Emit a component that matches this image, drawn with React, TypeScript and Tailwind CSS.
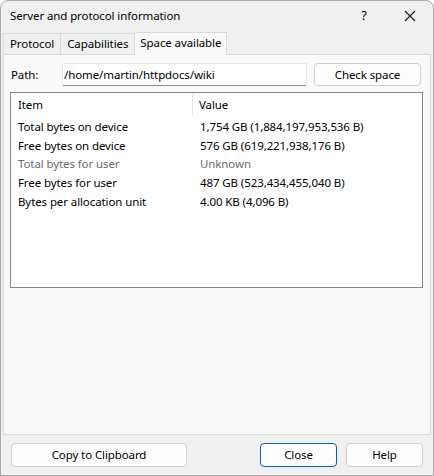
const rows = [
  { item: 'Total bytes on device', value: '1,754 GB (1,884,197,953,536 B)' },
  { item: 'Free bytes on device', value: '576 GB (619,221,938,176 B)' },
  { item: 'Total bytes for user', value: 'Unknown', muted: true },
  { item: 'Free bytes for user', value: '487 GB (523,434,455,040 B)' },
  { item: 'Bytes per allocation unit', value: '4.00 KB (4,096 B)' },
]

export default function App() {
  return (
    <div
      className="w-[434px] h-[476px] bg-[#f0f0f0] border border-[#a9a9a9] rounded-t-[8px] flex flex-col text-[11.5px] text-black overflow-hidden tracking-[-0.1px]"
      style={{ fontFamily: '"Noto Sans", "Open Sans", sans-serif' }}
    >
      {/* title bar */}
      <div className="h-[30px] flex items-center pl-[9px] shrink-0">
        <span className="flex-1">Server and protocol information</span>
        <span className="w-[24px] text-center mr-[28px] text-[13px]">?</span>
        <svg width="12" height="12" viewBox="0 0 12 12" className="mr-[17px]">
          <path d="M1 1L11 11M11 1L1 11" stroke="#1a1a1a" strokeWidth="1.1" fill="none" />
        </svg>
      </div>

      {/* tabs */}
      <div className="flex items-end px-[2px] h-[23px] shrink-0 relative z-10">
        <div className="h-[21px] px-[6px] flex items-center border border-b-0 border-[#d9d9d9] bg-[#f0f0f0]">Protocol</div>
        <div className="h-[21px] px-[6px] flex items-center border border-b-0 border-l-0 border-[#d9d9d9] bg-[#f0f0f0]">Capabilities</div>
        <div className="h-[23px] px-[5px] pb-[2px] flex items-center border border-b-0 border-l-0 border-[#d9d9d9] bg-[#f9f9f9] -mb-px">Space available</div>
      </div>

      {/* panel */}
      <div className="mx-[2px] h-[381px] border border-[#d9d9d9] bg-[#f9f9f9] px-[7px] pt-[8px] pb-[146px] flex flex-col shrink-0">
        <div className="flex items-center h-[23px]">
          <span className="w-[51px]">Path:</span>
          <div className="w-[245px] h-[23px] bg-white border border-[#e5e5e5] border-b-[#8a8a8a] flex items-center pl-[1px] rounded-[2px]">
            /home/martin/httpdocs/wiki
          </div>
          <button className="ml-[7px] w-[107px] h-[23px] bg-[#fdfdfd] border border-[#d0d0d0] rounded-[4px] flex items-center justify-center">
            Check space
          </button>
        </div>
        <div className="mt-[6px] -ml-px flex-1 bg-white border border-[#828790] flex flex-col">
          <div className="h-[23px] flex items-center shrink-0">
            <span className="w-[182px] pl-[7px] border-r border-[#e5e5e5] h-full flex items-center">Item</span>
            <span className="pl-[6px]">Value</span>
          </div>
          <div className="mt-[1px]">
            {rows.map((r) => (
              <div key={r.item} className={`h-[18.75px] flex items-center ${r.muted ? 'text-[#6d6d6d]' : ''}`}>
                <span className="w-[182px] pl-[7px]">{r.item}</span>
                <span className="pl-[7px]">{r.value}</span>
              </div>
            ))}
          </div>
        </div>
      </div>

      {/* bottom buttons */}
      <div className="flex items-center px-[10px] pt-[8px]">
        <button className="w-[176px] h-[24px] bg-[#fdfdfd] border border-[#d0d0d0] rounded-[4px]">Copy to Clipboard</button>
        <div className="flex-1" />
        <button className="w-[77px] h-[24px] bg-[#fdfdfd] border border-[#005fb8] rounded-[4px]">Close</button>
        <button className="ml-[9px] w-[77px] h-[24px] bg-[#fdfdfd] border border-[#d0d0d0] rounded-[4px]">Help</button>
      </div>
    </div>
  )
}
